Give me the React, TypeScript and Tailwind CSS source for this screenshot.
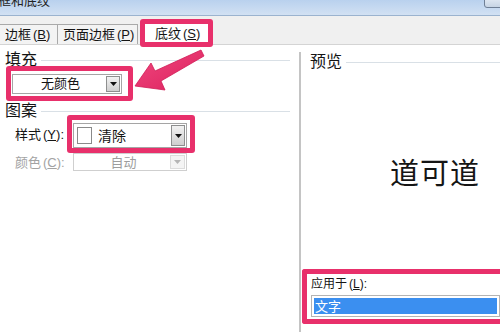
const PINK = 'border-[#e8306b]';

function DropButton({ disabled = false }: { disabled?: boolean }) {
  return (
    <div
      className={
        disabled
          ? 'w-[15px] self-stretch my-[1px] mr-[1px] flex items-center justify-center border border-[#dcdcdc] bg-[#f4f4f4]'
          : 'w-[14px] self-stretch my-[1px] mr-[1px] flex items-center justify-center border border-[#8e8f8f] bg-gradient-to-b from-[#f2f2f2] to-[#cfcfcf]'
      }
    >
      <svg width="7" height="4" viewBox="0 0 7 4">
        <path d="M0 0h7L3.5 4z" fill={disabled ? '#b5b5b5' : '#111'} />
      </svg>
    </div>
  );
}

function GroupHeader({ label, className }: { label: string; className?: string }) {
  return (
    <div className={'flex items-center gap-[4px] h-[14px] ' + (className ?? '')}>
      <span className="leading-none">{label}</span>
      <div className="flex-1 h-px bg-[#d9e0e6]" />
    </div>
  );
}

function Key({ k }: { k: string }) {
  return (
    <span className="ml-[2px]">
      (<u>{k}</u>)
    </span>
  );
}

function LeftPanel() {
  return (
    <div className="w-[299px] flex flex-col">
      <GroupHeader label="填充" className="mt-[8px] pl-[5px] pr-[9px]" />
      <div className={`ml-[6px] mt-[-1px] w-[127px] h-[35px] border-[5px] ${PINK} rounded-[3px] flex items-center px-[1px]`}>
        <div className="w-[110px] h-[20px] border border-[#a5a5a5] bg-white flex items-center">
          <span className="flex-1 text-center text-[13px] leading-none pl-[2px]">无颜色</span>
          <DropButton />
        </div>
      </div>
      <GroupHeader label="图案" className="mt-[3px] pl-[5px] pr-[9px]" />
      <div className="flex items-center mt-[-3px]">
        <span className="w-[67px] pl-[15px] text-[13px] leading-none">
          样式<Key k="Y" />:
        </span>
        <div className={`w-[128px] h-[38px] border-[5px] ${PINK} rounded-[3px] flex items-end pl-[1px]`}>
          <div className="w-[114px] h-[25px] border border-[#a5a5a5] bg-white flex items-center">
            <div className="ml-[3px] w-[15px] h-[17px] border border-[#8a8a8a] bg-white" />
            <span className="flex-1 pl-[6px] text-[14px] leading-none">清除</span>
            <DropButton />
          </div>
        </div>
      </div>
      <div className="flex items-center">
        <span className="w-[73px] pl-[15px] text-[13px] leading-none text-[#a3a3a3]">
          颜色<Key k="C" />:
        </span>
        <div className="w-[114px] h-[18px] border border-[#cfcfcf] bg-white flex items-center">
          <span className="flex-1 text-center text-[13px] leading-none text-[#9d9d9d] pl-[3px]">自动</span>
          <DropButton disabled />
        </div>
      </div>
    </div>
  );
}

function RightPanel() {
  return (
    <div className="flex-1 mt-[7px] border-l-2 border-[#c4c4c4] flex flex-col">
      <GroupHeader label="预览" className="mt-[3px] pl-[9px]" />
      <div className="mt-[88px] pl-[89px] text-[29px] leading-none tracking-[1px] text-[#151515] font-['Noto_Sans_CJK_SC',serif]">
        道可道
      </div>
      <div className="flex-1" />
      <div className={`ml-[1px] mb-[8px] h-[55px] border-[5px] border-r-0 ${PINK} rounded-l-[3px] flex flex-col pl-[4px] pt-[4px]`}>
        <span className="text-[12px] leading-none">
          应用于<Key k="L" />:
        </span>
        <div className="mt-[5px] h-[22px] border border-[#b4b4b4] bg-white p-[2px] flex">
          <div className="flex-1 bg-[#3b8ff0] flex items-center pl-[1px]">
            <span className="text-white text-[13px] leading-none">文字</span>
          </div>
        </div>
      </div>
    </div>
  );
}

function Arrow() {
  return (
    <svg className="absolute left-0 top-0 pointer-events-none" width="500" height="333" viewBox="0 0 500 333">
      <defs>
        <linearGradient id="ag" x1="0" y1="0" x2="1" y2="1">
          <stop offset="0" stopColor="#f04a80" />
          <stop offset="1" stopColor="#dc1f5c" />
        </linearGradient>
      </defs>
      <path
        d="M135 86 L151 63 L155 71 L201 50 L204 56 L161 81 L165 90 Z"
        fill="url(#ag)"
        stroke="#d11a55"
        strokeWidth="0.8"
        strokeLinejoin="round"
      />
    </svg>
  );
}

export default function App() {
  return (
    <div className="relative w-[500px] h-[333px] overflow-hidden bg-white text-[#141414] font-['Liberation_Sans','Noto_Sans_CJK_SC',sans-serif]">
      <div className="relative h-[16px] bg-gradient-to-b from-[#b9d1ee] to-[#d2e1f3] border-b border-[#9bb3cf]">
        <span className="absolute left-[-15px] top-[-6px] text-[13px] leading-[14px] text-[#222]">边框和底纹</span>
        <div className="absolute right-[-6px] top-[-4px] w-[22px] h-[12px] rounded-[3px] border border-[#6f7f95] bg-gradient-to-b from-[#e6edf6] to-[#c7d4e4]" />
      </div>
      <div className="h-[29px] bg-[#f0f0f0] border-b border-[#d4d4d4] flex items-end">
        <div className="flex items-end h-full">
          <div className="h-[20px] w-[58px] border-t border-r border-[#a9a9a9] bg-[#f3f3f3] flex items-center pl-[5px] text-[13px] leading-none">
            边框<Key k="B" />
          </div>
          <div className="h-[20px] w-[80px] border-t border-r border-[#a9a9a9] bg-[#f3f3f3] flex items-center pl-[5px] text-[13px] leading-none whitespace-nowrap">
            页面边框<Key k="P" />
          </div>
          <div className={`relative z-10 ml-[2px] mb-[-3px] w-[73px] h-[28px] border-[5px] ${PINK} rounded-[3px] bg-white flex items-center pl-[10px] text-[13px] leading-none`}>
            底纹<Key k="S" />
          </div>
        </div>
      </div>
      <div className="flex h-[287px]">
        <LeftPanel />
        <RightPanel />
      </div>
      <Arrow />
    </div>
  );
}
